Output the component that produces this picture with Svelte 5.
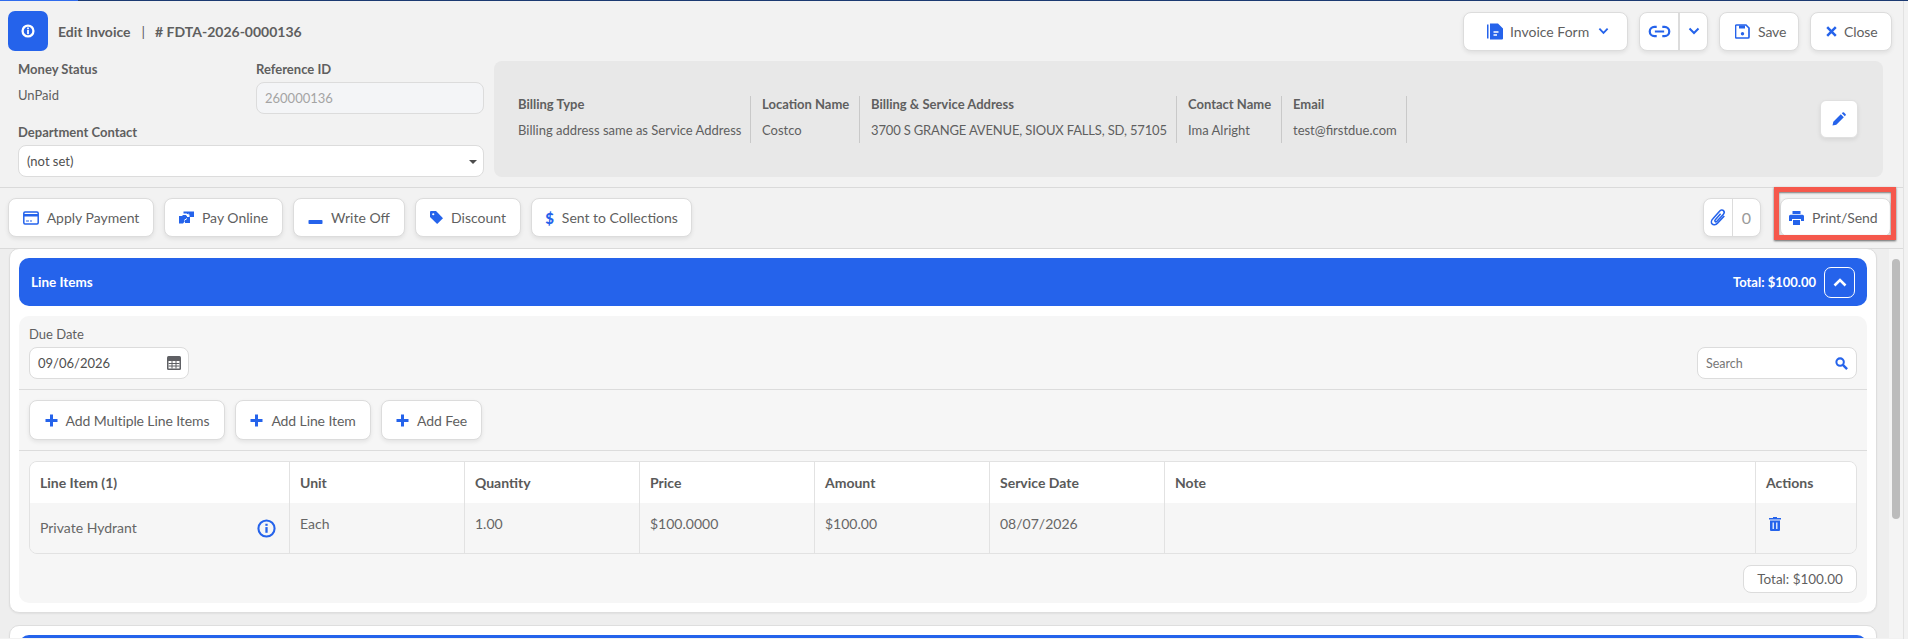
<script>
  const billing = [
    ['Billing Type', 'Billing address same as Service Address', 233],
    ['Location Name', 'Costco', 109],
    ['Billing & Service Address', '3700 S GRANGE AVENUE, SIOUX FALLS, SD, 57105', 317],
    ['Contact Name', 'Ima Alright', 105],
    ['Email', 'test@firstdue.com', 125]
  ];
  const cols = ['Line Item (1)', 'Unit', 'Quantity', 'Price', 'Amount', 'Service Date', 'Note', 'Actions'];
  const row = ['Each', '1.00', '$100.0000', '$100.00', '08/07/2026', ''];
</script>

<div class="page">
  <div class="topline"><span class="progress"></span></div>
  <div class="frame">
    <header class="head">
      <div class="title">
        <span class="badge">
          <svg viewBox="0 0 16 16" width="14" height="14"><circle cx="8" cy="8" r="6.2" fill="none" stroke="#fff" stroke-width="2.6"/><rect x="7" y="6.6" width="2" height="5" fill="#fff"/><rect x="7" y="4" width="2" height="1.8" fill="#fff"/></svg>
        </span>
        <span class="titletext">Edit Invoice</span><span class="pipe">|</span><span class="titletext"># FDTA-2026-0000136</span>
      </div>
      <div class="headbtns">
        <button class="btn form">
          <svg viewBox="0 0 17 17" width="17" height="17"><path d="M0 1.500h1.500v14H0zM3 0.500h8l5 5v10a1 1 0 0 1-1 1H3z" fill="#2563eb"/><path d="M6.500 9h5M6.500 12h3.500" stroke="#fff" stroke-width="1.400"/></svg>
          Invoice Form
          <svg class="chev" viewBox="0 0 12 8" width="11" height="8"><path d="M1.500 1.500 6 6l4.500-4.500" fill="none" stroke="#2563eb" stroke-width="2"/></svg>
        </button>
        <div class="group">
          <span class="seg linkseg">
            <svg viewBox="0 0 24 14" width="23" height="13"><path d="M9 2H6.500a5 5 0 0 0 0 10H9M15 2h2.500a5 5 0 0 1 0 10H15M7 7h10" fill="none" stroke="#2563eb" stroke-width="2.400"/></svg>
          </span>
          <span class="seg chevseg">
            <svg viewBox="0 0 12 8" width="12" height="8"><path d="M1.500 1.500 6 6l4.500-4.500" fill="none" stroke="#2563eb" stroke-width="2"/></svg>
          </span>
        </div>
        <button class="btn save">
          <svg viewBox="0 0 15 15" width="15" height="15"><path d="M1.500 1h9.500l3 3v9a1 1 0 0 1-1 1h-11.500a1 1 0 0 1-1-1v-11a1 1 0 0 1 1-1z" fill="none" stroke="#2563eb" stroke-width="1.700"/><rect x="4" y="1.500" width="6" height="3" fill="#2563eb"/><circle cx="7.500" cy="9.800" r="1.700" fill="#2563eb"/></svg>
          Save
        </button>
        <button class="btn close">
          <svg viewBox="0 0 11 11" width="11" height="11"><path d="M1.200 1.200l8.600 8.600M9.800 1.200l-8.600 8.600" stroke="#2563eb" stroke-width="2.500"/></svg>
          Close
        </button>
      </div>
    </header>

    <section class="info">
      <div class="fields">
        <div class="fieldrow">
          <div class="status"><div class="lbl">Money Status</div><div class="val">UnPaid</div></div>
          <div class="refid"><div class="lbl">Reference ID</div><div class="input disabled">260000136</div></div>
        </div>
        <div class="lbl dept">Department Contact</div>
        <div class="input select">(not set)<span class="caret"></span></div>
      </div>
      <div class="panel">
        {#each billing as [k, v, w]}
          <div class="bcell" style="width:{w}px"><div class="lbl">{k}</div><div class="val">{v}</div></div>
        {/each}
        <span class="spacer"></span>
        <button class="editbtn" aria-label="Edit">
          <svg viewBox="0 0 14 14" width="14" height="14"><path d="M0.500 13.500 1.300 9.700 8.800 2.200l3 3-7.500 7.500zM9.800 1.200l.8-.7a1 1 0 0 1 1.400 0l1.500 1.500a1 1 0 0 1 0 1.400l-.7.8z" fill="#2563eb"/></svg>
        </button>
      </div>
    </section>

    <section class="actions">
      <button class="btn a1">
        <svg viewBox="0 0 16 14" width="16" height="14"><rect x="0.800" y="1" width="14.400" height="12" rx="1.200" fill="none" stroke="#2563eb" stroke-width="1.500"/><rect x="1" y="3" width="14" height="2.500" fill="#2563eb"/><path d="M3 10h3M7 10h2" stroke="#2563eb" stroke-width="1.200"/></svg>
        Apply Payment
      </button>
      <button class="btn a2">
        <svg viewBox="0 0 15 13" width="15" height="13"><path d="M4.500 0.500h10.500v5.500h-4.500V3.500l-1.500-.2-1 .2V2.500H4.500z" fill="#2563eb"/><path d="M0 5h3.500v-1h4.500v2h3v6H6v-2L4 12.500H0z" fill="#2563eb"/><path d="M7 4.500 9.500 3M5 9.500l3-2" stroke="#fff" stroke-width="1"/></svg>
        Pay Online
      </button>
      <button class="btn a3">
        <svg viewBox="0 0 15 14" width="15" height="14"><rect x="0.500" y="9" width="14" height="4" rx="0.800" fill="#2563eb"/></svg>
        Write Off
      </button>
      <button class="btn a4">
        <svg viewBox="0 0 14 14" width="13" height="13"><path d="M1 0h5.500L14 7.700 7.700 14 0 6.500V1a1 1 0 0 1 1-1z" fill="#2563eb"/><circle cx="3.500" cy="3.500" r="1.200" fill="#fff"/></svg>
        Discount
      </button>
      <button class="btn a5">
        <span class="dollar">$</span>
        Sent to Collections
      </button>
      <span class="spacer"></span>
      <div class="group attach">
        <span class="seg clip">
          <svg viewBox="0 0 16 18" width="17" height="19"><path d="M13.500 7.500 7 14.500c-1.500 1.600-4 1.700-5 .7s-1-3.200.5-4.800L9 3c1-1.200 2.700-1.500 3.700-.5s.8 2.500-.2 3.600L6.500 12.500c-.5.500-1.300.7-1.700.3s-.3-1.100.200-1.700l5-5.600" fill="none" stroke="#2563eb" stroke-width="1.500"/></svg>
        </span>
        <span class="seg count">0</span>
      </div>
      <button class="btn print">
        <svg viewBox="0 0 15 14" width="15" height="14"><path d="M3.500 0h8v3h-8zM1.500 3.800h12A1.500 1.500 0 0 1 15 5.300V10h-3V8H3v2H0V5.300A1.500 1.500 0 0 1 1.500 3.800zM4 9h7v5H4z" fill="#2563eb"/></svg>
        Print/Send
      </button>
    </section>

    <div class="scroller">
      <main class="content">
        <section class="card">
          <div class="cardhead">
            <span class="cardtitle">Line Items</span>
            <span class="headtotal">Total: $100.00</span>
            <span class="collapse">
              <svg viewBox="0 0 14 9" width="14" height="9"><path d="M1.500 7.500 7 2l5.500 5.500" fill="none" stroke="#fff" stroke-width="2.600"/></svg>
            </span>
          </div>
          <div class="inner">
            <div class="filters">
              <div>
                <div class="duelbl">Due Date</div>
                <div class="input date">09/06/2026
                  <svg viewBox="0 0 14 14" width="14" height="14"><rect width="14" height="14" rx="1.500" fill="#5f6064"/><rect x="1.500" y="5" width="11" height="7.500" fill="#fff"/><path d="M1.500 7.500h11M1.500 10h11M5 5v7.500M9 5v7.500" stroke="#5f6064" stroke-width="1"/></svg>
                </div>
              </div>
              <div class="input search"><span>Search</span>
                <svg viewBox="0 0 14 14" width="13" height="13"><circle cx="5.500" cy="5.500" r="4" fill="none" stroke="#2563eb" stroke-width="2.200"/><path d="m8.500 8.500 4.500 4.500" stroke="#2563eb" stroke-width="2.600"/></svg>
              </div>
            </div>
            <div class="addrow">
              {#each [['Add Multiple Line Items', 196], ['Add Line Item', 136], ['Add Fee', 101]] as [t, w]}
                <button class="btn add" style="width:{w}px">
                  <svg viewBox="0 0 13 13" width="13" height="13"><path d="M6.500 0.500v12M0.500 6.500h12" stroke="#2563eb" stroke-width="3"/></svg>
                  {t}
                </button>
              {/each}
            </div>
            <div class="tablewrap">
              <div class="table">
                <div class="tr th">
                  {#each cols as c}<div class="cell">{c}</div>{/each}
                </div>
                <div class="tr td">
                  <div class="cell first">
                    Private Hydrant
                    <svg viewBox="0 0 20 20" width="19" height="19"><circle cx="10" cy="10" r="8.500" fill="none" stroke="#2563eb" stroke-width="2.200"/><rect x="8.800" y="8.500" width="2.400" height="6" fill="#2563eb"/><rect x="8.800" y="5" width="2.400" height="2.200" fill="#2563eb"/></svg>
                  </div>
                  {#each row as r}<div class="cell">{r}</div>{/each}
                  <div class="cell">
                    <svg class="trash" viewBox="0 0 12 14" width="12" height="14"><path d="M4 0h4v1h4v1.500H0V1h4zM1 3.500h10V13a1 1 0 0 1-1 1H2a1 1 0 0 1-1-1z" fill="#2563eb"/><path d="M4.200 5.500V12M7.800 5.500V12" stroke="#fff" stroke-width="1.200"/></svg>
                  </div>
                </div>
              </div>
              <div class="totalrow"><span class="totalbox">Total: $100.00</span></div>
            </div>
          </div>
        </section>
        <section class="card next"><div class="cardhead"></div></section>
      </main>
      <div class="track"><span class="thumb"></span></div>
    </div>
    <span class="annot"></span>
  </div>
</div>

<style>
  :global(body) { margin: 0; background: #f2f2f2; }
  .page { width: 1908px; height: 639px; overflow: hidden; font-family: Lato, "Liberation Sans", sans-serif; font-size: 13px; color: #5a5a5a; background: #f2f2f2; }
  .topline { height: 1px; background: #1c3a72; }
  .progress { display: block; width: 78px; height: 1px; background: #2f6bed; }
  .frame { width: 1903px; height: 638px; border-right: 1px solid #e2e2e2; position: relative; }
  button { font: inherit; color: inherit; }
  svg { flex: none; display: block; }

  .head { display: flex; justify-content: space-between; align-items: center; height: 40px; padding: 10px 11px 0 8px; }
  .title { display: flex; align-items: center; font-size: 14px; font-weight: 700; color: #5f5f5f; }
  .badge { width: 40px; height: 40px; border-radius: 7px; background: #2563eb; display: flex; align-items: center; justify-content: center; margin-right: 10px; }
  .pipe { margin: 0 10px 0 11px; font-weight: 400; }
  .headbtns { display: flex; gap: 11px; }

  .btn { display: inline-flex; align-items: center; justify-content: center; gap: 8px; height: 39px; padding: 0; box-sizing: border-box; background: #fff; border: 1px solid #dcdcdc; border-radius: 8px; box-shadow: 0 2px 4px rgba(0, 0, 0, .08); font-size: 14px; color: #5f5f5f; white-space: nowrap; }
  .form { width: 165px; gap: 6px; justify-content: flex-start; padding-left: 23px; }
  .chev { margin-left: 3px; }
  .save { width: 80px; justify-content: flex-start; padding-left: 15px; letter-spacing: -.1px; }
  .close { width: 82px; gap: 7px; justify-content: flex-start; padding-left: 15px; letter-spacing: -.1px; }
  .group { display: flex; height: 39px; box-sizing: border-box; background: #fff; border: 1px solid #dcdcdc; border-radius: 8px; box-shadow: 0 2px 4px rgba(0, 0, 0, .08); }
  .seg { display: flex; align-items: center; justify-content: center; box-sizing: border-box; }
  .linkseg { width: 40px; border-right: 2px solid #dcdcdc; }
  .chevseg { width: 27px; }

  .info { display: flex; height: 137px; padding: 10px 20px 0 18px; box-sizing: border-box; border-bottom: 1px solid #dadada; }
  .fields { width: 466px; margin-right: 10px; }
  .fieldrow { display: flex; height: 63px; }
  .status { width: 238px; }
  .lbl { font-size: 13px; font-weight: 700; color: #5f5f5f; line-height: 16px; }
  .val { font-size: 13px; color: #5f5f5f; line-height: 16px; margin-top: 10px; }
  .refid { width: 228px; }
  .refid .lbl { margin-bottom: 5px; }
  .input { display: flex; align-items: center; height: 32px; box-sizing: border-box; border: 1px solid #dcdcdc; border-radius: 8px; background: #fff; padding: 0 8px; font-size: 13px; color: #4f4f4f; }
  .disabled { background: #f4f5f7; color: #a4a4a4; }
  .dept { margin-bottom: 5px; }
  .select { position: relative; justify-content: flex-start; }
  .caret { position: absolute; right: 6px; top: 14px; border: 4px solid transparent; border-top: 4px solid #4d4d4d; border-bottom: 0; }
  .panel { flex: 1; height: 116px; background: #e8e8e8; border-radius: 8px; display: flex; align-items: center; padding: 0 25px 0 24px; }
  .bcell { height: 47px; box-sizing: border-box; border-right: 1px solid #c9c9c9; padding-left: 11px; }
  .bcell:first-child { padding-left: 0; }
  .bcell:nth-child(3) .val { letter-spacing: -.16px; }
  .spacer { flex: 1; }
  .editbtn { width: 38px; height: 38px; padding: 0; display: flex; align-items: center; justify-content: center; background: #fff; border: 1px solid #e0e0e0; border-radius: 6px; box-shadow: 0 2px 4px rgba(0, 0, 0, .08); }

  .actions { display: flex; height: 61px; box-sizing: border-box; padding: 10px 12px 0 8px; gap: 10px; border-bottom: 1px solid #dadada; }
  .a1 { width: 146px; }
  .a2 { width: 119px; }
  .a3 { width: 112px; }
  .a4 { width: 106px; }
  .a5 { width: 161px; }
  .dollar { color: #2563eb; font-weight: 900; font-size: 15px; }
  .attach { width: 58px; margin-right: 9px; }
  .clip { width: 29px; border-right: 1px solid #dcdcdc; }
  .count { flex: 1; color: #9a9a9a; font-size: 16px; }
  .print { width: 111px; justify-content: flex-start; padding-left: 8px; letter-spacing: -.1px; }

  .scroller { display: flex; height: 389px; background: #eeeeee; overflow: hidden; }
  .content { width: 1877px; padding-left: 9px; box-sizing: border-box; flex: none; margin-top: -1px; }
  .track { flex: 1; margin-left: 12px; background: #f4f4f4; padding: 10px 3px 0; }
  .thumb { display: block; width: 8px; height: 260px; background: #bcbcbc; border-radius: 4px; }
  .card { background: #fff; border: 1px solid #dedede; border-radius: 10px; padding: 9px; box-sizing: border-box; height: 365px; width: 1868px; box-shadow: 0 1px 2px rgba(0, 0, 0, .06); }
  .next { margin-top: 12px; height: 60px; }
  .cardhead { display: flex; align-items: center; height: 48px; background: #2563eb; border-radius: 10px; color: #fff; padding: 0 12px; font-size: 13px; font-weight: 700; }
  .cardtitle { flex: 1; font-size: 13.500px; }
  .headtotal { margin-right: 8px; }
  .collapse { width: 31px; height: 31px; box-sizing: border-box; border: 1px solid #fff; border-radius: 7px; display: flex; align-items: center; justify-content: center; }
  .inner { margin-top: 10px; height: 287px; background: #f6f6f6; border-radius: 10px; }
  .filters { display: flex; justify-content: space-between; align-items: flex-end; height: 74px; box-sizing: border-box; padding: 10px 10px 10px; border-bottom: 1px solid #dcdcdc; }
  .duelbl { font-size: 13px; line-height: 16px; margin-bottom: 5px; color: #5f5f5f; }
  .date { width: 160px; justify-content: space-between; padding-right: 7px; }
  .search { width: 160px; justify-content: space-between; color: #777; font-size: 12.500px; }
  .addrow { display: flex; gap: 10px; height: 61px; box-sizing: border-box; padding: 10px 10px 0; border-bottom: 1px solid #dcdcdc; }
  .add { height: 40px; letter-spacing: -.1px; }
  .tablewrap { padding: 10px 10px 0; }
  .table { border: 1px solid #e2e2e2; border-radius: 8px; overflow: hidden; width: 1828px; box-sizing: border-box; }
  .tr { display: grid; grid-template-columns: 260px 175px 175px 175px 175px 175px 591px 100px; }
  .th { height: 41px; background: #fff; font-weight: 700; font-size: 14px; color: #5a5a5a; }
  .th .cell { display: flex; align-items: center; }
  .td { height: 50px; background: #f6f6f6; font-size: 14px; color: #666; }
  .cell { padding: 0 10px; box-sizing: border-box; border-right: 1px solid #e2e2e2; }
  .cell:last-child { border-right: 0; }
  .td .cell { padding-top: 13px; line-height: 16px; }
  .td .first { display: flex; align-items: center; justify-content: space-between; padding: 0 13px 0 10px; }
  .trash { margin-top: 1px; margin-left: 3px; }
  .totalrow { display: flex; justify-content: flex-end; margin-top: 11px; }
  .totalbox { display: flex; align-items: center; justify-content: center; width: 114px; height: 28px; box-sizing: border-box; background: #fff; border: 1px solid #dcdcdc; border-radius: 8px; font-size: 13.500px; color: #5f5f5f; }
  .annot { position: absolute; left: 1774px; top: 186px; width: 122px; height: 53px; box-sizing: border-box; border: 5px solid #f5584c; box-shadow: 0 1px 2px rgba(0, 0, 0, .6), inset 0 1px 2px rgba(0, 0, 0, .5); }
</style>
